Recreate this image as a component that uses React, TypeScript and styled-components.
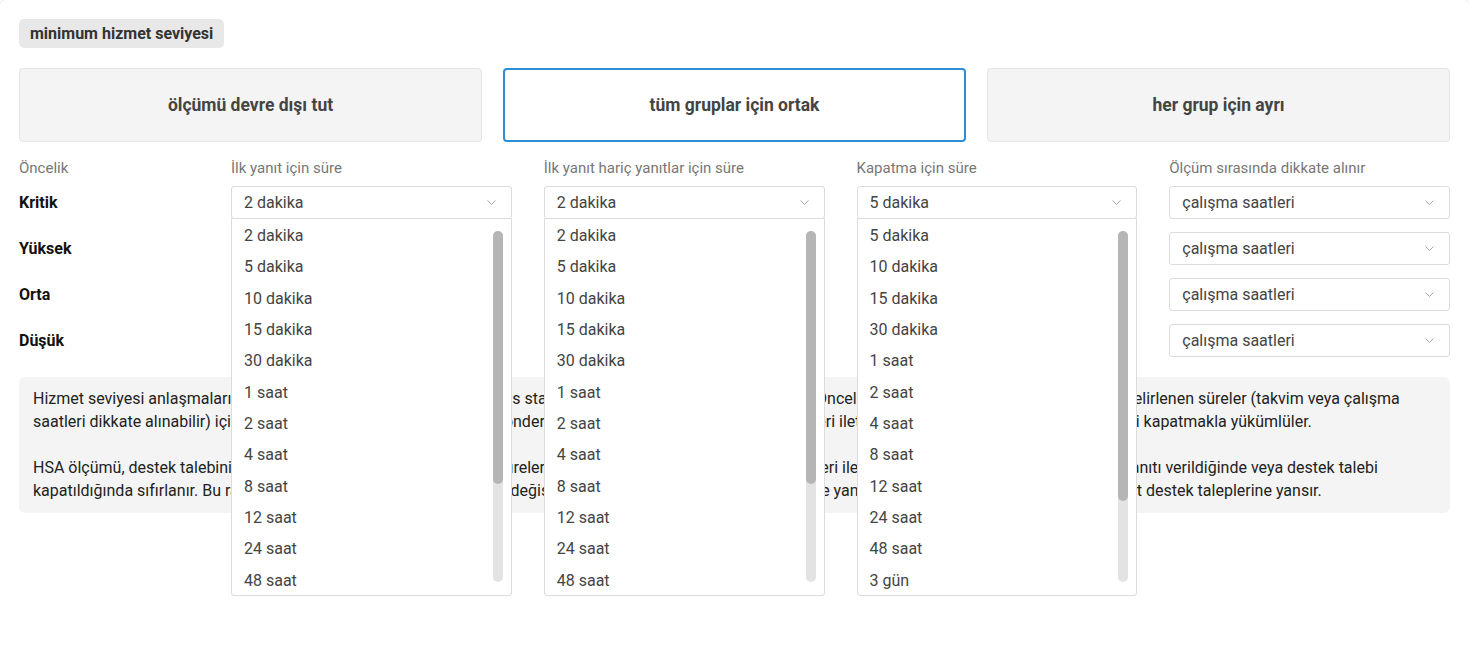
import React from "react"
import styled, { createGlobalStyle } from "styled-components"

const GlobalStyle = createGlobalStyle`
  html, body {
    margin: 0;
    padding: 0;
    background: #fff;
    font-family: Roboto, "Liberation Sans", Arial, sans-serif;
  }
  html {
    overflow: hidden;
  }
`

const Card = styled.div`
  margin: -2px -2px 0 -2px;
  padding: 20px 20px 0;
  min-height: calc(100vh + 40px);
  box-sizing: border-box;
  border: 1px solid #ececec;
  border-radius: 10px;
  background: #fff;
`

const Badge = styled.div`
  display: inline-flex;
  align-items: center;
  height: 29px;
  padding: 0 11px;
  border-radius: 5px;
  background: #e8e8e8;
  color: #333;
  font-size: 16px;
  font-weight: 700;
`

const ModeRow = styled.div`
  display: grid;
  grid-template-columns: repeat(3, 1fr);
  column-gap: 21px;
  margin-top: 20px;
`

const ModeButton = styled.button<{ $active?: boolean }>`
  height: 74px;
  box-sizing: border-box;
  border-radius: 4px;
  border: ${(p) => (p.$active ? "2px solid #2b8ed7" : "1px solid #e4e4e4")};
  background: ${(p) => (p.$active ? "#fff" : "#f4f4f4")};
  color: #444;
  font-family: inherit;
  font-size: 17.5px;
  font-weight: 700;
  cursor: pointer;
`

const Grid = styled.div`
  display: grid;
  grid-template-columns: 180px repeat(4, 1fr);
  column-gap: 32px;
  row-gap: 13px;
  margin-top: 17px;
`

const HeadCell = styled.div`
  color: #777;
  font-size: 15px;
  line-height: 18px;
  margin-bottom: -4px;
  white-space: nowrap;
`

const Priority = styled.div`
  display: flex;
  align-items: center;
  color: #111;
  font-size: 16px;
  font-weight: 700;
`

const SelectWrap = styled.div`
  position: relative;
`

const SelectBox = styled.div`
  display: flex;
  align-items: center;
  justify-content: space-between;
  height: 33px;
  box-sizing: border-box;
  padding: 0 15px 0 12px;
  border: 1px solid #dcdcdc;
  border-radius: 3px;
  background: #fff;
  color: #444;
  font-size: 16px;
`

const Menu = styled.div`
  position: absolute;
  left: 0;
  right: 0;
  top: 32px;
  z-index: 5;
  height: 378px;
  box-sizing: border-box;
  padding-top: 1px;
  border: 1px solid #dcdcdc;
  border-radius: 0 0 3px 3px;
  background: #fff;
  overflow: hidden;
`

const Option = styled.div`
  height: 31.33px;
  line-height: 31.33px;
  padding-left: 12px;
  color: #444;
  font-size: 16px;
`

const Track = styled.div`
  position: absolute;
  top: 12px;
  bottom: 13px;
  right: 8px;
  width: 10px;
  border-radius: 5px;
  background: #e3e3e3;
`

const Thumb = styled.div`
  width: 100%;
  border-radius: 5px;
  background: #b5b5b5;
`

const Info = styled.div`
  margin-top: 20px;
  padding: 10px 14px 11px;
  border-radius: 6px;
  background: #f4f4f4;
  color: #222;
  font-size: 16px;
  line-height: 23px;
  white-space: nowrap;
  overflow: hidden;
`

const Chevron = () => (
  <svg width="9" height="5" viewBox="0 0 9 5" fill="none">
    <path d="M0.5 0.5l4 4 4-4" stroke="#a8a8a8" strokeWidth="1" />
  </svg>
)

const short = ["2 dakika", "5 dakika", "10 dakika", "15 dakika", "30 dakika"]
const rest = ["1 saat", "2 saat", "4 saat", "8 saat", "12 saat", "24 saat", "48 saat", "3 gün", "5 gün", "7 gün", "14 gün"]
const firstOptions = [...short, ...rest]
const closeOptions = [...short.slice(1), ...rest]

const Select = ({ value, options }: { value: string; options?: string[] }) => (
  <SelectWrap>
    <SelectBox>
      <span>{value}</span>
      <Chevron />
    </SelectBox>
    {options && (
      <Menu>
        {options.map((o) => (
          <Option key={o}>{o}</Option>
        ))}
        <Track>
          <Thumb style={{ height: `${Math.round((12 / (options.length + 0.6)) * 100)}%` }} />
        </Track>
      </Menu>
    )}
  </SelectWrap>
)

const priorities = ["Kritik", "Yüksek", "Orta", "Düşük"]

export default function App() {
  return (
    <>
      <GlobalStyle />
      <Card>
        <Badge>minimum hizmet seviyesi</Badge>
        <ModeRow>
          <ModeButton>ölçümü devre dışı tut</ModeButton>
          <ModeButton $active>tüm gruplar için ortak</ModeButton>
          <ModeButton>her grup için ayrı</ModeButton>
        </ModeRow>
        <Grid>
          <HeadCell>Öncelik</HeadCell>
          <HeadCell>İlk yanıt için süre</HeadCell>
          <HeadCell>İlk yanıt hariç yanıtlar için süre</HeadCell>
          <HeadCell>Kapatma için süre</HeadCell>
          <HeadCell>Ölçüm sırasında dikkate alınır</HeadCell>
          {priorities.map((p, i) => (
            <React.Fragment key={p}>
              <Priority>{p}</Priority>
              <Select value="2 dakika" options={i === 0 ? firstOptions : undefined} />
              <Select value="2 dakika" options={i === 0 ? firstOptions : undefined} />
              <Select value="5 dakika" options={i === 0 ? closeOptions : undefined} />
              <Select value="çalışma saatleri" />
            </React.Fragment>
          ))}
        </Grid>
        <Info>
          Hizmet seviyesi anlaşmaları, destek ekiplerinizin uyacağı performans standartlarıdır. Tabloda yazılmış olan her Öncelik düzeyi için destek ekibi temsilcileri, belirlenen süreler (takvim veya çalışma
          <br />
          saatleri dikkate alınabilir) içinde tüm müşterilerinize ilk yanıtlarını göndermekle, sonraki yanıtları ve güncellemeleri iletmekle ve çözümlenen destek taleplerini kapatmakla yükümlüler.
          <br />
          <br />
          HSA ölçümü, destek talebinin oluşturulduğu andan itibaren hedef sürelerle karşılaştırılır. Kalan süre sayacı müşteri ile yazışması sırasında her bir beklenen yanıtı verildiğinde veya destek talebi
          <br />
          kapatıldığında sıfırlanır. Bu rakamlarda ve ayarlarında sonra yapılan değişiklikler, yalnızca yeni oluşturulacaklar ve yanıt bekleyen ya da hâlâ açık kalan mevcut destek taleplerine yansır.
        </Info>
      </Card>
    </>
  )
}
